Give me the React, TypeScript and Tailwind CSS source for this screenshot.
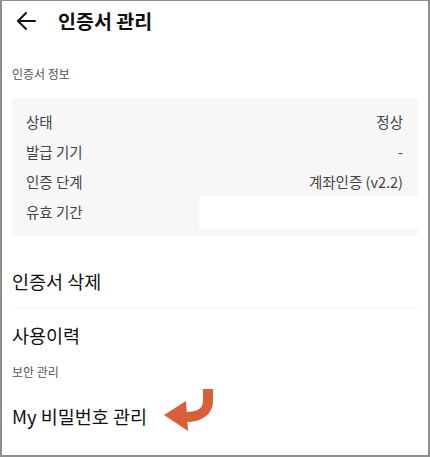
export default function App() {
  const rows = [
    { label: "상태", value: "정상" },
    { label: "발급 기기", value: "-" },
    { label: "인증 단계", value: "계좌인증 (v2.2)" },
  ];

  return (
    <div
      className="w-[430px] h-[457px] box-border bg-white border-t border-l-2 border-r-2 border-b-2 border-[#8f8f8f] overflow-hidden"
      style={{ fontFamily: '"Noto Sans CJK KR", "Noto Sans", sans-serif' }}
    >
      <header className="h-[39px] flex items-center">
        <svg width="40" height="24" viewBox="0 0 40 24" className="ml-[2px]" fill="none" stroke="#111" strokeWidth="2" strokeLinecap="round" strokeLinejoin="round">
          <path d="M14 12h17" />
          <path d="M22 4l-8 8 8 8" />
        </svg>
        <h1 className="ml-[14px] text-[19.5px] font-bold text-[#111] leading-none">인증서 관리</h1>
      </header>

      <section className="px-[10px]">
        <p className="mt-[26px] text-[12px] leading-[16px] text-[#555]">인증서 정보</p>

        <div className="mt-[16px] bg-[#f7f7f7] rounded-[4px] py-[9px] pl-[14px] pr-[15px]">
          {rows.map((r) => (
            <div key={r.label} className="h-[30px] flex items-center justify-between text-[14.5px] text-[#444]">
              <span>{r.label}</span>
              <span>{r.value}</span>
            </div>
          ))}
          <div className="h-[30px] flex items-center justify-between text-[14.5px] text-[#444]">
            <span>유효 기간</span>
            <span className="-mr-[15px] w-[219px] h-[33px] bg-white" />
          </div>
        </div>

        <p className="mt-[33px] text-[18.5px] leading-[24px] text-[#111]">인증서 삭제</p>
        <div className="mt-[15px] h-px bg-[#f5f5f5]" />
        <p className="mt-[14px] text-[18.5px] leading-[24px] text-[#111]">사용이력</p>
        <p className="mt-[17px] text-[12px] leading-[16px] text-[#555]">보안 관리</p>

        <div className="relative mt-[24px]">
          <p className="text-[18.5px] leading-[24px] text-[#111]">My 비밀번호 관리</p>
          <svg
            width="54"
            height="48"
            viewBox="0 0 54 48"
            className="absolute left-[150px] -top-[17px]"
          >
            <path d="M46 2v12c0 10-8 16-22 16" fill="none" stroke="#d95f3a" strokeWidth="10" />
            <polygon points="2,28 24,14 26,44" fill="#d95f3a" />
          </svg>
        </div>
      </section>
    </div>
  );
}
